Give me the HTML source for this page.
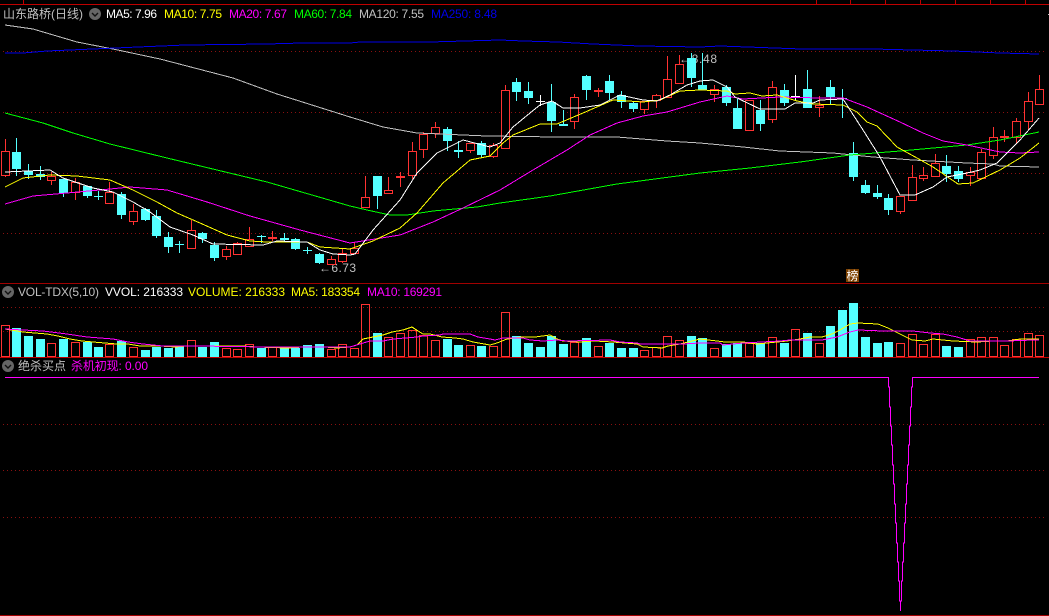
<!DOCTYPE html>
<html><head><meta charset="utf-8"><title>山东路桥(日线)</title>
<style>
html,body{margin:0;padding:0;background:#000;width:1049px;height:616px;overflow:hidden}
svg{display:block}
text{font-family:"Liberation Sans","Noto Sans CJK SC",sans-serif;font-size:12px}
.l{fill:none;stroke-width:1;shape-rendering:crispEdges}
.a{shape-rendering:crispEdges}
</style></head><body>
<svg width="1049" height="616" viewBox="0 0 1049 616" xmlns="http://www.w3.org/2000/svg">
<rect width="1049" height="616" fill="#000"/>
<!-- frame lines -->
<path class="l" stroke="#c00000" d="M0 4.5H1049M23.5 0V4M816.5 0V4M850.5 0V4M885.5 0V4M920.5 0V4M955.5 0V4M990.5 0V4M1025.5 0V4"/>
<path class="l" stroke="#a00000" d="M0 283.5H1049"/>
<path class="l" stroke="#c00000" d="M0 357.5H1049"/>
<path class="l" stroke="#a00000" d="M0 615.5H1049"/>
<path class="l" stroke="#c0c0c0" d="M1048 14.5H1049"/>
<!-- grid -->
<path class="l" stroke="#8a1010" stroke-dasharray="1 3" d="M3 51.5H1047M3 112.5H1047M3 173.5H1047M3 233.5H1047M3 307.5H1047M3 331.5H1047M3 424.5H1047M3 470.5H1047M3 517.5H1047"/>
<!-- price labels under candles -->
<text x="319" y="272" fill="#c0c0c0" textLength="37" lengthAdjust="spacing">←6.73</text>
<text x="679" y="63" fill="#c0c0c0" textLength="38" lengthAdjust="spacing">←8.48</text>
<!-- candles: cyan -->
<path class="l" stroke="#54ffff" d="M16.5 138V176M28.5 164V179M40.5 166V180M63.5 179V197M87.5 186V198M98.5 191V200M121.5 192V219M145.5 208V221M156.5 210V238M168.5 232V253M179.5 241V253M202.5 232V243M214.5 242V261M261.5 235V243M284.5 233V242M295.5 238V250M307.5 247V254M319.5 253V264M377.5 176V209M447.5 127V151M458.5 141V158M481.5 141V157M516.5 78V101M528.5 82V104M551.5 84V132M563.5 110V126M586.5 75V100M609.5 75V100M621.5 91V108M633.5 101V112M691.5 53V87M702.5 53V90M726.5 85V106M737.5 99V129M760.5 100V131M784.5 84V106M807.5 70V108M830.5 80V104M842.5 89V118M853.5 142V181M865.5 180V194M877.5 185V199M888.5 194V215M946.5 155V182M958.5 166V182"/>
<path class="a" fill="#54ffff" d="M12 152h9V169h-9zM24 171h9V175h-9zM36 174h9V177h-9zM59 179h9V193h-9zM83 186h9V196h-9zM94 196h9V197h-9zM117 194h9V215h-9zM141 209h9V220h-9zM152 216h9V236h-9zM164 237h9V247h-9zM175 244h9V245h-9zM198 233h9V239h-9zM210 245h9V258h-9zM257 236h9V237h-9zM280 238h9V240h-9zM291 239h9V249h-9zM303 250h9V251h-9zM315 254h9V263h-9zM373 176h9V196h-9zM443 129h9V141h-9zM454 150h9V152h-9zM477 143h9V155h-9zM512 82h9V92h-9zM524 91h9V98h-9zM547 102h9V121h-9zM559 124h9V126h-9zM582 76h9V90h-9zM605 81h9V93h-9zM617 95h9V102h-9zM629 103h9V109h-9zM687 58h9V78h-9zM698 85h9V90h-9zM722 87h9V103h-9zM733 108h9V129h-9zM756 110h9V124h-9zM780 90h9V103h-9zM803 89h9V108h-9zM826 87h9V97h-9zM838 98h9V99h-9zM849 153h9V177h-9zM861 185h9V193h-9zM873 193h9V197h-9zM884 198h9V210h-9zM942 166h9V174h-9zM954 171h9V179h-9z"/>
<!-- candles: red -->
<path class="l" stroke="#ff3232" d="M5.5 139V177M51.5 172V185M75.5 178V200M109.5 182V204M133.5 204V225M191.5 220V248M226.5 246V260M237.5 242V254M249.5 227V247M272.5 231V241M331.5 256V264M342.5 249V263M354.5 242V253M365.5 176V207M388.5 177V193M400.5 172V187M412.5 142V179M423.5 132V158M435.5 122V138M470.5 143V153M493.5 143V158M505.5 85V148M574.5 94V129M598.5 88V97M644.5 101V114M656.5 94V108M667.5 56V97M679.5 55V83M714.5 85V102M749.5 100V130M772.5 81V123M819.5 96V117M900.5 196V214M912.5 165V200M923.5 167V181M935.5 154V176M970.5 167V186M981.5 149V178M993.5 127V159M1004.5 130V142M1016.5 118V143M1028.5 92V130M1039.5 75V104"/>
<path class="l" style="fill:#000" stroke="#ff3232" d="M1.5 151.5h8V175.5h-8zM47.5 176.5h8V180.5h-8zM71.5 182.5h8V192.5h-8zM105.5 192.5h8V203.5h-8zM129.5 211.5h8V221.5h-8zM187.5 230.5h8V248.5h-8zM222.5 249.5h8V256.5h-8zM233.5 243.5h8V254.5h-8zM245.5 239.5h8V246.5h-8zM327.5 259.5h8V264.5h-8zM338.5 253.5h8V261.5h-8zM350.5 248.5h8V253.5h-8zM361.5 197.5h8V207.5h-8zM384.5 190.5h8V193.5h-8zM408.5 151.5h8V175.5h-8zM419.5 134.5h8V149.5h-8zM431.5 127.5h8V133.5h-8zM466.5 143.5h8V150.5h-8zM489.5 145.5h8V156.5h-8zM501.5 90.5h8V148.5h-8zM570.5 97.5h8V121.5h-8zM640.5 101.5h8V109.5h-8zM652.5 95.5h8V100.5h-8zM663.5 79.5h8V97.5h-8zM675.5 64.5h8V83.5h-8zM710.5 89.5h8V94.5h-8zM745.5 100.5h8V130.5h-8zM768.5 87.5h8V119.5h-8zM815.5 105.5h8V107.5h-8zM896.5 196.5h8V211.5h-8zM908.5 177.5h8V200.5h-8zM919.5 175.5h8V178.5h-8zM931.5 163.5h8V176.5h-8zM966.5 172.5h8V175.5h-8zM977.5 152.5h8V178.5h-8zM989.5 137.5h8V155.5h-8zM1012.5 121.5h8V137.5h-8zM1024.5 101.5h8V121.5h-8zM1035.5 89.5h8V104.5h-8z"/>
<path class="a" fill="#ff3232" d="M268 237h9V239h-9zM396 176h9V178h-9zM594 90h9V92h-9zM1000 136h9V138h-9z"/>
<!-- white doji candles -->
<path class="l" stroke="#fff" d="M540.5 95V106M536 101.5H545M795.5 75V100M791 96.5H800"/>
<!-- MA lines -->
<polyline class="l" stroke="#c0c0c0" points="5,25 33,29 77,42 113,49 160,59 233,78 277,94 350,117 383,127 417,133 463,135 487,136 557,137 617,137 667,141 700,143 743,147 780,151 833,153 873,157 913,160 967,163 993,164 1000,166 1039,167"/>
<polyline class="l" stroke="#0000e8" points="5,53 23,53 47,51 93,49 138,47 185,45 267,44 302,43 350,43 360,42 430,42 500,40 523,41 558,42 593,44 640,46 700,47 720,46 802,49 873,49 953,51 1000,53 1039,54"/>
<polyline class="l" stroke="#00ff00" points="5,113 43,123 73,133 110,144 167,158 217,170 267,182 350,206 367,210 390,215 407,215 433,211 477,207 500,203 550,196 617,184 700,173 750,168 800,162 850,155 900,151 967,145 1000,140 1039,132"/>
<polyline class="l" stroke="#ff00ff" points="5,204 33,196 67,193 100,190 130,187 167,190 207,202 250,216 300,230 350,243 400,235 433,222 463,208 500,190 533,170 567,150 590,135 617,123 643,116 667,112 700,102 727,96 743,99 780,97 820,98 843,98 867,107 900,122 923,133 943,141 967,145 1000,152 1020,153 1039,152"/>
<polyline class="l" stroke="#ffff00" points="5,187 23,178 50,175 77,176 110,180 133,190 157,202 177,213 200,223 227,235 250,241 267,242 307,242 320,247 350,249 373,241 400,228 417,213 443,183 470,160 490,156 503,143 513,135 540,124 557,124 583,113 613,100 643,102 660,100 680,91 700,90 727,91 735,94 750,93 762,96 777,95 797,101 813,104 843,105 857,112 867,122 877,126 897,147 917,158 933,167 958,184 973,183 1000,170 1020,158 1039,143"/>
<polyline class="l" stroke="#ffffff" points="5,172 50,170 63,178 93,188 113,192 133,202 150,212 170,227 193,235 213,244 263,245 277,241 307,242 320,250 333,254 350,255 355,254 373,230 400,200 417,173 437,153 463,140 490,147 500,143 513,127 530,113 540,105 552,101 563,108 580,108 600,105 620,95 643,100 657,101 670,95 687,85 700,81 713,80 727,87 735,97 760,109 785,109 795,103 813,103 820,100 843,99 863,130 880,157 900,195 915,195 933,187 947,177 967,173 980,170 997,163 1007,153 1020,140 1039,118"/>
<!-- volume bars -->
<path class="a" fill="#54ffff" d="M12 328h9V357h-9zM24 336h9V357h-9zM36 339h9V357h-9zM59 339h9V357h-9zM83 342h9V357h-9zM94 347h9V357h-9zM117 341h9V357h-9zM141 350h9V357h-9zM152 347h9V357h-9zM164 348h9V357h-9zM175 347h9V357h-9zM198 347h9V357h-9zM210 342h9V357h-9zM257 348h9V357h-9zM280 347h9V357h-9zM291 348h9V357h-9zM303 345h9V357h-9zM315 344h9V357h-9zM373 333h9V357h-9zM443 339h9V357h-9zM454 345h9V357h-9zM477 346h9V357h-9zM512 336h9V357h-9zM524 343h9V357h-9zM536 347h9V357h-9zM547 336h9V357h-9zM559 344h9V357h-9zM582 338h9V357h-9zM605 343h9V357h-9zM617 348h9V357h-9zM629 348h9V357h-9zM687 336h9V357h-9zM698 338h9V357h-9zM722 344h9V357h-9zM733 343h9V357h-9zM756 343h9V357h-9zM780 343h9V357h-9zM803 333h9V357h-9zM826 326h9V357h-9zM838 310h9V357h-9zM849 303h9V357h-9zM861 337h9V357h-9zM873 343h9V357h-9zM884 342h9V357h-9zM942 346h9V357h-9zM954 347h9V357h-9z"/>
<path class="l" stroke="#ff3232" d="M1.5 325.5h8V356.5h-8zM47.5 343.5h8V356.5h-8zM71.5 342.5h8V356.5h-8zM105.5 344.5h8V356.5h-8zM129.5 347.5h8V356.5h-8zM187.5 340.5h8V356.5h-8zM222.5 348.5h8V356.5h-8zM233.5 349.5h8V356.5h-8zM245.5 344.5h8V356.5h-8zM268.5 347.5h8V356.5h-8zM327.5 349.5h8V356.5h-8zM338.5 344.5h8V356.5h-8zM350.5 348.5h8V356.5h-8zM361.5 304.5h8V356.5h-8zM384.5 337.5h8V356.5h-8zM396.5 333.5h8V356.5h-8zM408.5 330.5h8V356.5h-8zM419.5 335.5h8V356.5h-8zM431.5 340.5h8V356.5h-8zM466.5 345.5h8V356.5h-8zM489.5 346.5h8V356.5h-8zM501.5 312.5h8V356.5h-8zM570.5 342.5h8V356.5h-8zM594.5 346.5h8V356.5h-8zM640.5 350.5h8V356.5h-8zM652.5 347.5h8V356.5h-8zM663.5 336.5h8V356.5h-8zM675.5 340.5h8V356.5h-8zM710.5 348.5h8V356.5h-8zM745.5 343.5h8V356.5h-8zM768.5 337.5h8V356.5h-8zM791.5 329.5h8V356.5h-8zM815.5 343.5h8V356.5h-8zM896.5 343.5h8V356.5h-8zM908.5 334.5h8V356.5h-8zM919.5 344.5h8V356.5h-8zM931.5 334.5h8V356.5h-8zM966.5 339.5h8V356.5h-8zM977.5 337.5h8V356.5h-8zM989.5 337.5h8V356.5h-8zM1000.5 345.5h8V356.5h-8zM1012.5 339.5h8V356.5h-8zM1024.5 333.5h8V356.5h-8zM1035.5 335.5h8V356.5h-8z"/>
<polyline class="l" stroke="#ffff00" points="5,329 23,332 35,333 47,334 58,336 70,339 82,341 93,342 105,343 117,344 128,344 140,346 160,346 175,347 187,346 207,346 220,346 243,346 257,347 287,348 303,347 325,347 337,348 350,347 357,345 363,339 373,337 383,335 392,332 403,330 412,327 418,331 423,334 430,334 442,337 455,338 463,339 473,342 490,345 497,343 507,339 522,337 535,337 550,335 557,339 563,341 580,342 595,341 613,342 637,344 643,347 662,348 668,346 680,344 700,339 717,341 725,342 743,342 757,344 777,342 787,341 800,339 810,337 822,337 832,334 840,330 850,324 858,323 878,324 888,328 900,334 912,340 925,341 933,339 953,341 977,342 993,341 1007,341 1020,339 1039,339"/>
<polyline class="l" stroke="#ff00ff" points="5,329 23,330 43,331 67,334 87,337 113,339 128,342 143,344 163,346 197,346 267,347 350,347 360,344 370,341 383,341 393,339 417,337 423,336 440,335 443,334 470,334 478,337 490,339 495,340 503,338 523,338 530,340 543,341 557,340 567,341 610,340 620,342 637,343 640,344 683,344 700,343 720,343 723,345 743,343 780,341 790,340 822,340 837,337 850,332 858,330 883,331 913,331 930,333 943,334 957,337 970,341 1008,341 1033,340 1039,340"/>
<!-- kill signal panel -->
<path class="l" stroke="#ff00ff" d="M5 377.5H888.5V387H889.5V407H890.5V426H891.5V445H892.5V465H893.5V484H894.5V504H895.5V523H896.5V543H897.5V562H898.5V581H899.5V601H900.5V611M900.5 601H901.5V581H902.5V562H903.5V543H904.5V523H905.5V504H906.5V484H907.5V465H908.5V445H909.5V426H910.5V407H911.5V387H912.5V377.5H1039"/>
<!-- badge -->
<rect x="846" y="269" width="13" height="13" fill="#7d4100" class="a"/>
<text x="846.5" y="280" fill="#fff" textLength="12" lengthAdjust="spacingAndGlyphs">榜</text>
<!-- circle icons -->
<g>
<circle cx="95" cy="14" r="6" fill="#666"/><path d="M92 13l3 3 3-3" fill="none" stroke="#111" stroke-width="1.4"/>
<circle cx="8" cy="292" r="6" fill="#666"/><path d="M5 291l3 3 3-3" fill="none" stroke="#111" stroke-width="1.4"/>
<circle cx="8" cy="366" r="6" fill="#666"/><path d="M5 365l3 3 3-3" fill="none" stroke="#111" stroke-width="1.4"/>
</g>
<!-- legends -->
<text x="3" y="18" fill="#c0c0c0" textLength="80" lengthAdjust="spacing">山东路桥(日线)</text>
<text x="106" y="18" fill="#fff" textLength="51" lengthAdjust="spacing">MA5: 7.96</text>
<text x="164" y="18" fill="#ffff00" textLength="58" lengthAdjust="spacing">MA10: 7.75</text>
<text x="229" y="18" fill="#ff00ff" textLength="58" lengthAdjust="spacing">MA20: 7.67</text>
<text x="294" y="18" fill="#00ff00" textLength="58" lengthAdjust="spacing">MA60: 7.84</text>
<text x="359" y="18" fill="#c0c0c0" textLength="65" lengthAdjust="spacing">MA120: 7.55</text>
<text x="431" y="18" fill="#0000e8" textLength="66" lengthAdjust="spacing">MA250: 8.48</text>
<text x="18" y="296" fill="#c0c0c0" textLength="81" lengthAdjust="spacing">VOL-TDX(5,10)</text>
<text x="105" y="296" fill="#fff" textLength="78" lengthAdjust="spacing">VVOL: 216333</text>
<text x="188" y="296" fill="#ffff00" textLength="97" lengthAdjust="spacing">VOLUME: 216333</text>
<text x="291" y="296" fill="#ffff00" textLength="69" lengthAdjust="spacing">MA5: 183354</text>
<text x="367" y="296" fill="#ff00ff" textLength="75" lengthAdjust="spacing">MA10: 169291</text>
<text x="18" y="370" fill="#c0c0c0" textLength="48" lengthAdjust="spacing">绝杀买点</text>
<text x="71" y="370" fill="#ff00ff" textLength="77" lengthAdjust="spacing">杀机初现: 0.00</text>
</svg>
</body></html>
